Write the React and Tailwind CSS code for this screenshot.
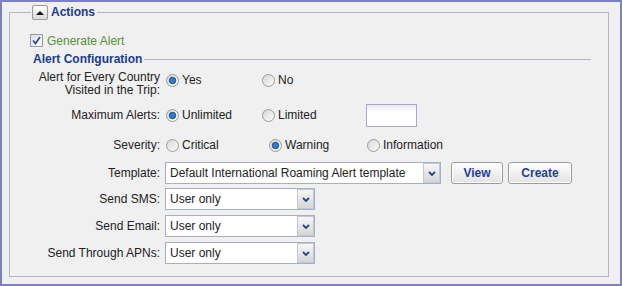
import React from 'react';

function Radio({ checked }) {
  return (
    <svg width="13" height="13" viewBox="0 0 13 13" className="shrink-0">
      <defs>
        <linearGradient id="rbg" x1="0" y1="0" x2="1" y2="1">
          <stop offset="0" stopColor="#d4d4d4" />
          <stop offset="1" stopColor="#ffffff" />
        </linearGradient>
      </defs>
      <circle cx="6.5" cy="6.5" r="6" fill="url(#rbg)" stroke="#9a9a9a" />
      {checked && <circle cx="6.5" cy="6.5" r="3.2" fill="#2f7fd0" stroke="#1c4a80" strokeWidth="1" />}
    </svg>
  );
}

function Option({ label, checked, w }) {
  return (
    <div className="flex items-center gap-[3px] shrink-0" style={{ width: w }}>
      <Radio checked={checked} />
      <span>{label}</span>
    </div>
  );
}

function Select({ value, w }) {
  return (
    <div className="flex h-[22px] items-center border border-[#a7aec6] bg-white" style={{ width: w }}>
      <span className="flex-1 pl-[4px] whitespace-nowrap overflow-hidden">{value}</span>
      <div className="flex h-[20px] w-[17px] items-center justify-center border border-[#c4c8d6] bg-gradient-to-b from-[#f6f6f6] to-[#d6d6d6]">
        <svg width="8" height="5" viewBox="0 0 8 5">
          <path d="M1 1 L4 4 L7 1" fill="none" stroke="#27468a" strokeWidth="1.8" />
        </svg>
      </div>
    </div>
  );
}

function Row({ label, children, h = 22, top = 0 }) {
  return (
    <div className="flex items-center" style={{ height: h, marginTop: top }}>
      <div className="w-[150px] text-right whitespace-nowrap">{label}</div>
      <div className="ml-[5px] flex items-center">{children}</div>
    </div>
  );
}

const Button = ({ children, w }) => (
  <button
    className="h-[22px] rounded-[3px] border border-[#9c9c9c] bg-gradient-to-b from-white to-[#e2e2e2] font-bold text-[#1f3f99] shadow-[inset_0_0_0_1px_#ffffff]"
    style={{ width: w }}
  >
    {children}
  </button>
);

export default function App() {
  return (
    <div className="box-border h-[286px] w-[622px] overflow-hidden border-2 border-[#7f7fc4] bg-[#f0f0f0] font-['Liberation_Sans',Arial,sans-serif] text-[12px] text-[#222]">
      <fieldset className="ml-[7px] mt-[1px] box-border h-[274px] w-[600px] border border-[#b3b3cc]">
        <legend className="ml-[21px] px-[1px] pr-[2px]">
          <span className="flex items-center gap-[3px]">
            <span className="flex h-[15px] w-[16px] items-center justify-center rounded-[2px] border border-[#9a9a9a] bg-gradient-to-b from-white to-[#dcdcdc]">
              <svg width="8" height="5" viewBox="0 0 8 5">
                <path d="M0 5 L4 1 L8 5 Z" fill="#111" />
              </svg>
            </span>
            <span className="text-[12px] font-bold text-[#1b3d8f]">Actions</span>
          </span>
        </legend>

        <div className="mt-[13px] flex h-[13px] items-center gap-[4px] pl-[20px]">
          <span className="flex h-[13px] w-[13px] items-center justify-center border border-[#8e9bb1] bg-gradient-to-br from-[#dcdcdc] to-white">
            <svg width="9" height="9" viewBox="0 0 9 9">
              <path d="M1 4.5 L3.5 7.5 L8 1" fill="none" stroke="#2a4ca0" strokeWidth="1.7" />
            </svg>
          </span>
          <span className="text-[#5a8f3c]">Generate Alert</span>
        </div>

        <div className="mt-[5px] flex h-[14px] items-center pl-[23px] pr-[17px]">
          <span className="font-bold text-[#1b3d8f]">Alert Configuration</span>
          <div className="ml-[2px] h-px flex-1 bg-[#b3b3cc]" />
        </div>

        <div className="mt-[5px] flex items-start">
          <div className="w-[150px] text-right leading-[13px]">
            Alert for Every Country
            <br />
            Visited in the Trip:
          </div>
          <div className="ml-[6px] flex">
            <Option label="Yes" checked w={96} />
            <Option label="No" w={60} />
          </div>
        </div>

        <Row label="Maximum Alerts:" top={7}>
          <div className="ml-[1px] flex items-center">
            <Option label="Unlimited" checked w={96} />
            <Option label="Limited" w={104} />
            <div className="h-[23px] w-[51px] border border-[#a9a9c9] bg-[linear-gradient(#e8e8e8,#ffffff_7px)]" />
          </div>
        </Row>

        <Row label="Severity:" top={8}>
          <div className="ml-[1px] flex items-center">
            <Option label="Critical" w={103} />
            <Option label="Warning" checked w={98} />
            <Option label="Information" w={100} />
          </div>
        </Row>

        <Row label="Template:" top={6}>
          <Select value="Default International Roaming Alert template" w={276} />
          <div className="ml-[10px] flex gap-[5px]">
            <Button w={52}>View</Button>
            <Button w={64}>Create</Button>
          </div>
        </Row>

        <Row label="Send SMS:" top={4}>
          <Select value="User only" w={150} />
        </Row>
        <Row label="Send Email:" top={5}>
          <Select value="User only" w={150} />
        </Row>
        <Row label="Send Through APNs:" top={5}>
          <Select value="User only" w={150} />
        </Row>
      </fieldset>
    </div>
  );
}
